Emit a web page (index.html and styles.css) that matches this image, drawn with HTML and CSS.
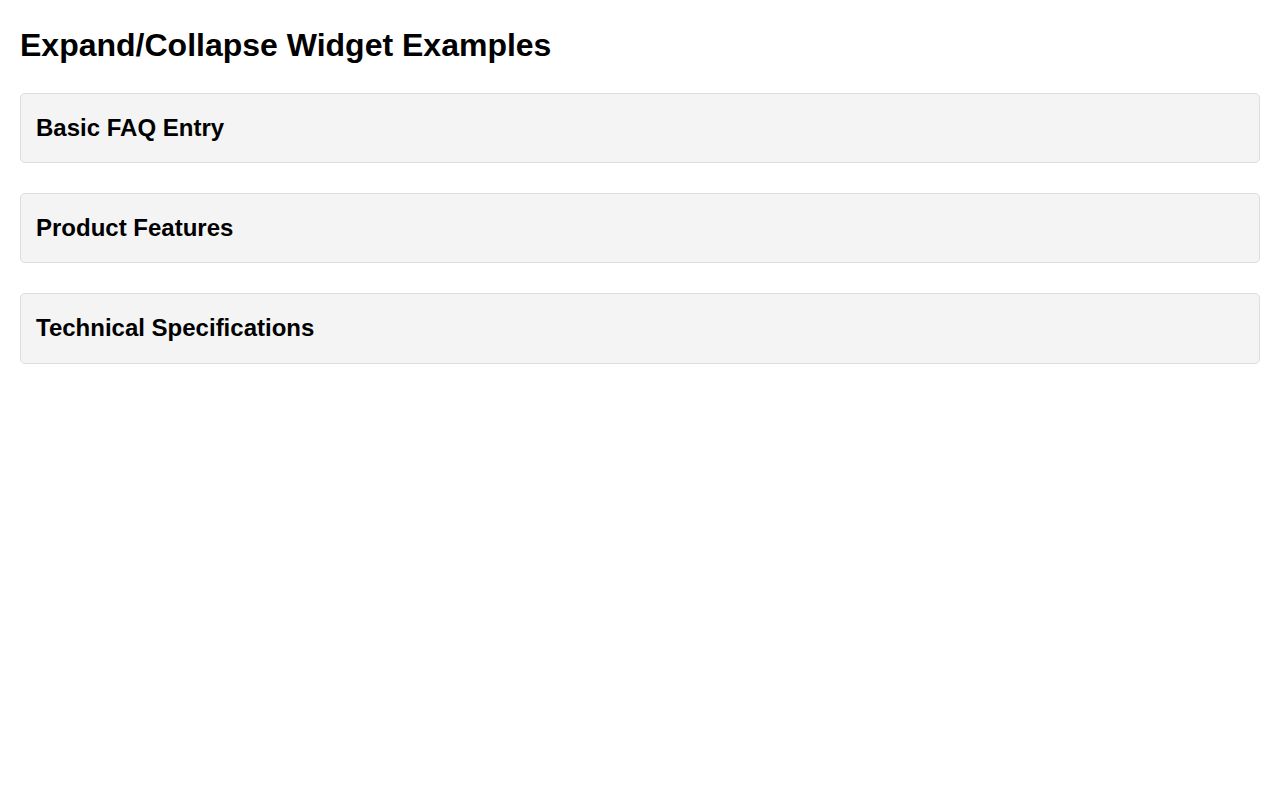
FILE: index.html
```html
<!DOCTYPE html>
<html lang="en">

<head>
    <meta charset="UTF-8">
    <title>Expand/Collapse Widget Examples</title>
    <link rel="stylesheet" href="styles.css">
</head>

<body>

    <h1>Expand/Collapse Widget Examples</h1>

    <div class="widget">
        <h2 class="widget-title">Basic FAQ Entry</h2>
        <div class="widget-body">
            <p>Answers go here once the entry is opened.</p>
        </div>
    </div>

    <div class="widget">
        <h2 class="widget-title">Product Features</h2>
        <div class="widget-body">
            <p>Feature list goes here.</p>
        </div>
    </div>

    <div class="widget">
        <h2 class="widget-title">Technical Specifications</h2>
        <div class="widget-body">
            <p>Spec table goes here.</p>
        </div>
    </div>

    <script>
        document.querySelectorAll('.widget-title').forEach(function (title) {
            title.addEventListener('click', function () {
                title.parentElement.classList.toggle('open');
            });
        });
    </script>

</body>

</html>
```

FILE: styles.css
```css
body {
    margin: 0;
    padding: 20px;
    font-family: "Liberation Sans", Arial, sans-serif;
    line-height: 1.6;
    color: #000;
    background: #fff;
}

h1 {
    font-size: 32px;
    margin: 0 0 0.67em;
}

.widget {
    background: #f4f4f4;
    border: 1px solid #ddd;
    border-radius: 5px;
    padding: 15px;
    margin-bottom: 30px;
}

.widget-title {
    font-size: 24px;
    margin: 0;
    cursor: pointer;
}

.widget-body {
    display: none;
}

.widget.open .widget-body {
    display: block;
}
```
